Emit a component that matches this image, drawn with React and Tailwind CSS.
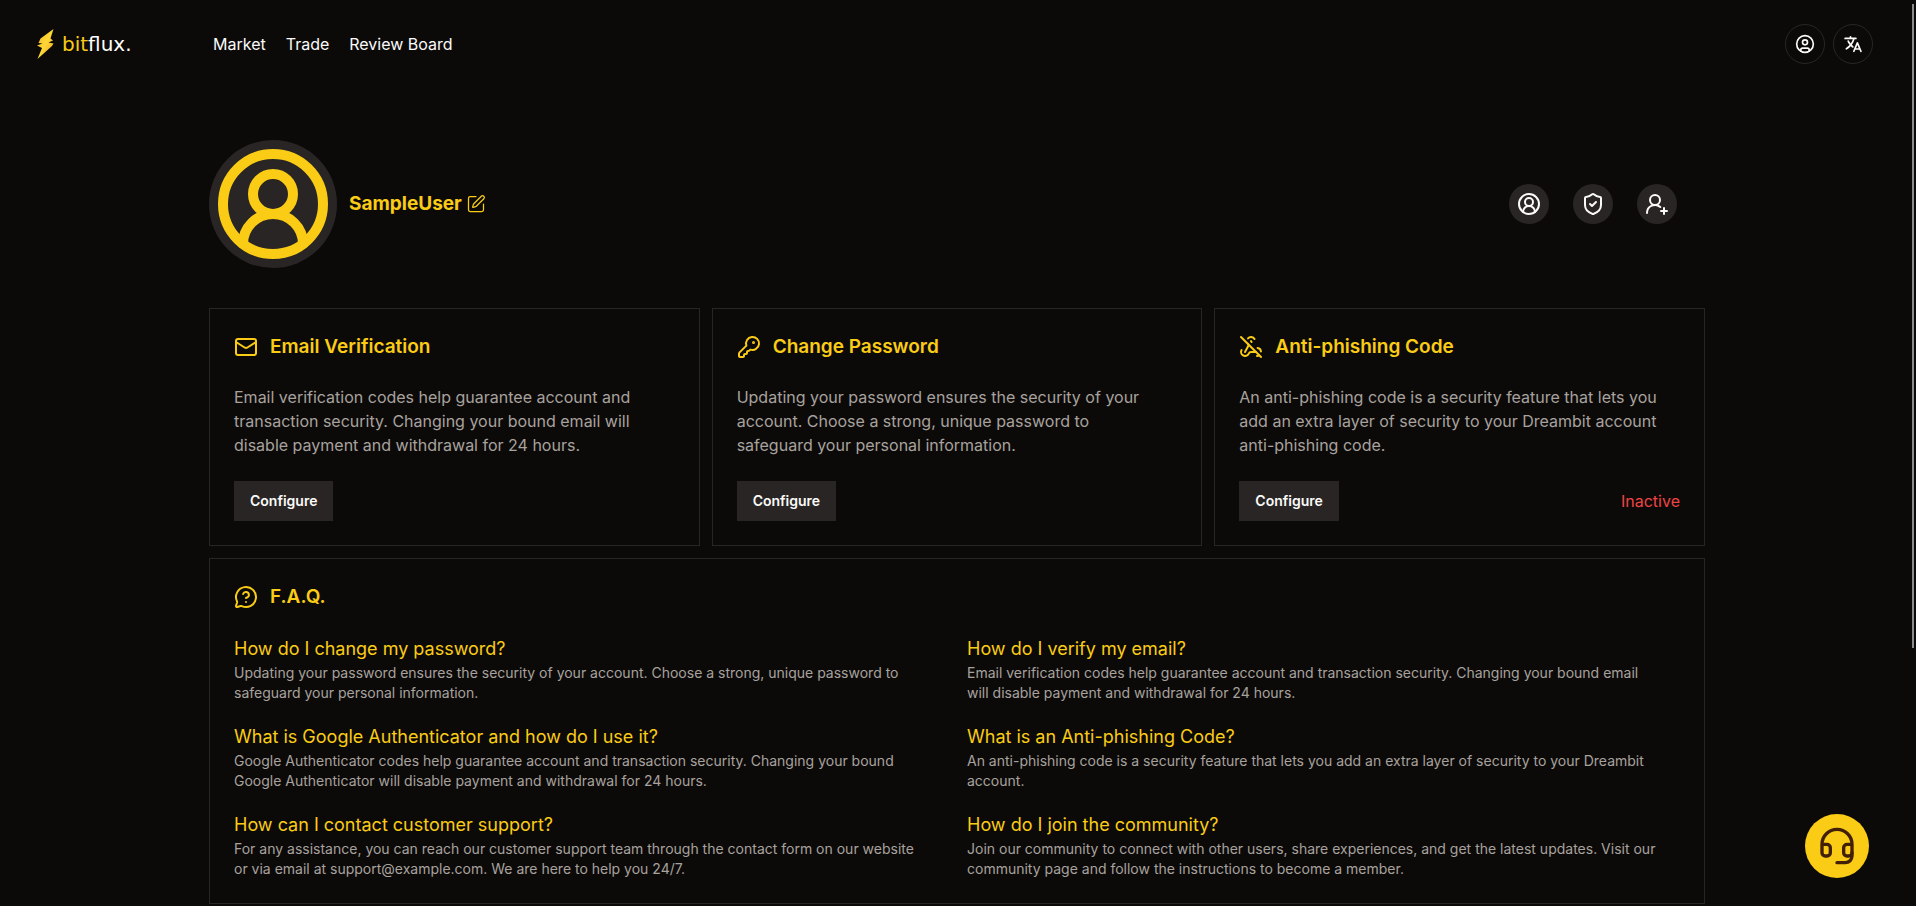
import { CircleUser, CircleUserRound, ShieldCheck, UserRoundPlus, SquarePen, Mail, KeyRound, WebhookOff, MessageCircleQuestionMark, Headset } from "lucide-react";
import { IoLanguage } from "react-icons/io5";

const navLinks = ["Market", "Trade", "Review Board"];

const cards = [
  {
    icon: Mail,
    title: "Email Verification",
    text: "Email verification codes help guarantee account and transaction security. Changing your bound email will disable payment and withdrawal for 24 hours.",
  },
  {
    icon: KeyRound,
    title: "Change Password",
    text: "Updating your password ensures the security of your account. Choose a strong, unique password to safeguard your personal information.",
  },
  {
    icon: WebhookOff,
    title: "Anti-phishing Code",
    text: "An anti-phishing code is a security feature that lets you add an extra layer of security to your Dreambit account anti-phishing code.",
    status: "Inactive",
  },
];

const faqs = [
  ["How do I change my password?", "Updating your password ensures the security of your account. Choose a strong, unique password to safeguard your personal information."],
  ["How do I verify my email?", "Email verification codes help guarantee account and transaction security. Changing your bound email will disable payment and withdrawal for 24 hours."],
  ["What is Google Authenticator and how do I use it?", "Google Authenticator codes help guarantee account and transaction security. Changing your bound Google Authenticator will disable payment and withdrawal for 24 hours."],
  ["What is an Anti-phishing Code?", "An anti-phishing code is a security feature that lets you add an extra layer of security to your Dreambit account."],
  ["How can I contact customer support?", "For any assistance, you can reach our customer support team through the contact form on our website or via email at support@example.com. We are here to help you 24/7."],
  ["How do I join the community?", "Join our community to connect with other users, share experiences, and get the latest updates. Visit our community page and follow the instructions to become a member."],
];

function Logo() {
  return (
    <a href="#" aria-label="bitflux." className="flex w-[153px] items-center gap-2 font-['DejaVu_Sans',sans-serif] text-xl leading-6">
      <svg width="18" height="32" viewBox="0 0 18 32" aria-hidden="true">
        <defs>
          <linearGradient id="bolt" x1="0" y1="0" x2="1" y2="1">
            <stop offset="0" stopColor="#fbb02d" />
            <stop offset="0.5" stopColor="#fdd835" />
            <stop offset="1" stopColor="#f59e1b" />
          </linearGradient>
        </defs>
        <path d="M17.500 1 4.500 10.500 2.500 15 6.500 15.500 1 17.500 6 20 1.500 31 16 18 17.500 15.500 12.500 14.500 17 12.500 14.500 10.500Z" fill="url(#bolt)" />
      </svg>
      <span className="text-white"><span className="text-[#facc15]">bit</span>flux.</span>
    </a>
  );
}

function Header() {
  return (
    <header className="flex h-[88px] items-center justify-between pr-[43px] pl-9">
      <div className="flex items-center gap-6">
        <Logo />
        <nav className="flex gap-5 text-base">
          {navLinks.map((label) => (
            <a key={label} href="#" className="hover:text-[#facc15]">{label}</a>
          ))}
        </nav>
      </div>
      <div className="flex gap-2">
        <button type="button" aria-label="Account" className="flex size-10 items-center justify-center rounded-full border border-[#292524]">
          <CircleUser size={20} />
        </button>
        <button type="button" aria-label="Language" className="flex size-10 items-center justify-center rounded-full border border-[#292524]">
          <IoLanguage size={20} />
        </button>
      </div>
    </header>
  );
}

function Profile() {
  const actions = [
    ["Profile", CircleUserRound],
    ["Security", ShieldCheck],
    ["Invite a friend", UserRoundPlus],
  ];
  return (
    <section className="flex items-center justify-between pr-7">
      <div className="flex items-center gap-3">
        <div className="flex size-32 items-center justify-center rounded-full bg-[#292524] text-[#facc15]">
          <CircleUserRound size={120} />
        </div>
        <div className="flex items-center gap-1 text-[#facc15]">
          <h1 className="text-[19px] leading-7 font-bold">SampleUser</h1>
          <button type="button" aria-label="Edit name"><SquarePen size={20} strokeWidth={1.5} /></button>
        </div>
      </div>
      <div className="flex gap-6">
        {actions.map(([label, Icon]) => (
          <button key={label} type="button" aria-label={label} className="flex size-10 items-center justify-center rounded-full bg-[#292524]">
            <Icon size={24} />
          </button>
        ))}
      </div>
    </section>
  );
}

function CardTitle({ icon: Icon, children }) {
  return (
    <h2 className="flex items-center gap-3 text-[19px] leading-7 font-semibold text-[#facc15]">
      <Icon size={24} />
      {children}
    </h2>
  );
}

export default function App() {
  return (
    <div className="h-screen overflow-hidden bg-[#0c0a09] font-[Inter,sans-serif] text-[#fafaf9]">
      <Header />
      <main className="mx-auto flex max-w-[1498px] flex-col pt-[52px] pr-[2px]">
        <Profile />
        <div className="mt-10 grid grid-cols-3 gap-3">
          {cards.map((card) => (
            <section key={card.title} className="flex flex-col border border-[#292524] p-6">
              <CardTitle icon={card.icon}>{card.title}</CardTitle>
              <p className="mt-6 pr-3 text-base text-[#a8a29e]">{card.text}</p>
              <div className="mt-6 flex items-center justify-between">
                <button type="button" className="h-10 bg-[#292524] px-4 text-sm font-semibold">Configure</button>
                {card.status && <span className="text-base text-[#ef4444]">{card.status}</span>}
              </div>
            </section>
          ))}
        </div>
        <section className="mt-3 border border-[#292524] p-6">
          <CardTitle icon={MessageCircleQuestionMark}>F.A.Q.</CardTitle>
          <dl className="mt-6 grid grid-cols-2 gap-x-5 gap-y-5">
            {faqs.map(([question, answer]) => (
              <div key={question} className="pr-5">
                <dt className="text-lg leading-7 text-[#facc15]">{question}</dt>
                <dd className="text-sm text-[#a8a29e]">{answer}</dd>
              </div>
            ))}
          </dl>
        </section>
      </main>
      <button type="button" aria-label="Customer support" className="fixed right-[47px] bottom-7 flex size-16 items-center justify-center rounded-full bg-[#facc15] text-[#422006]">
        <Headset size={40} />
      </button>
      <div className="fixed top-1 right-[2px] h-[644px] w-[2px] bg-[#8a8a8a]" />
    </div>
  );
}
